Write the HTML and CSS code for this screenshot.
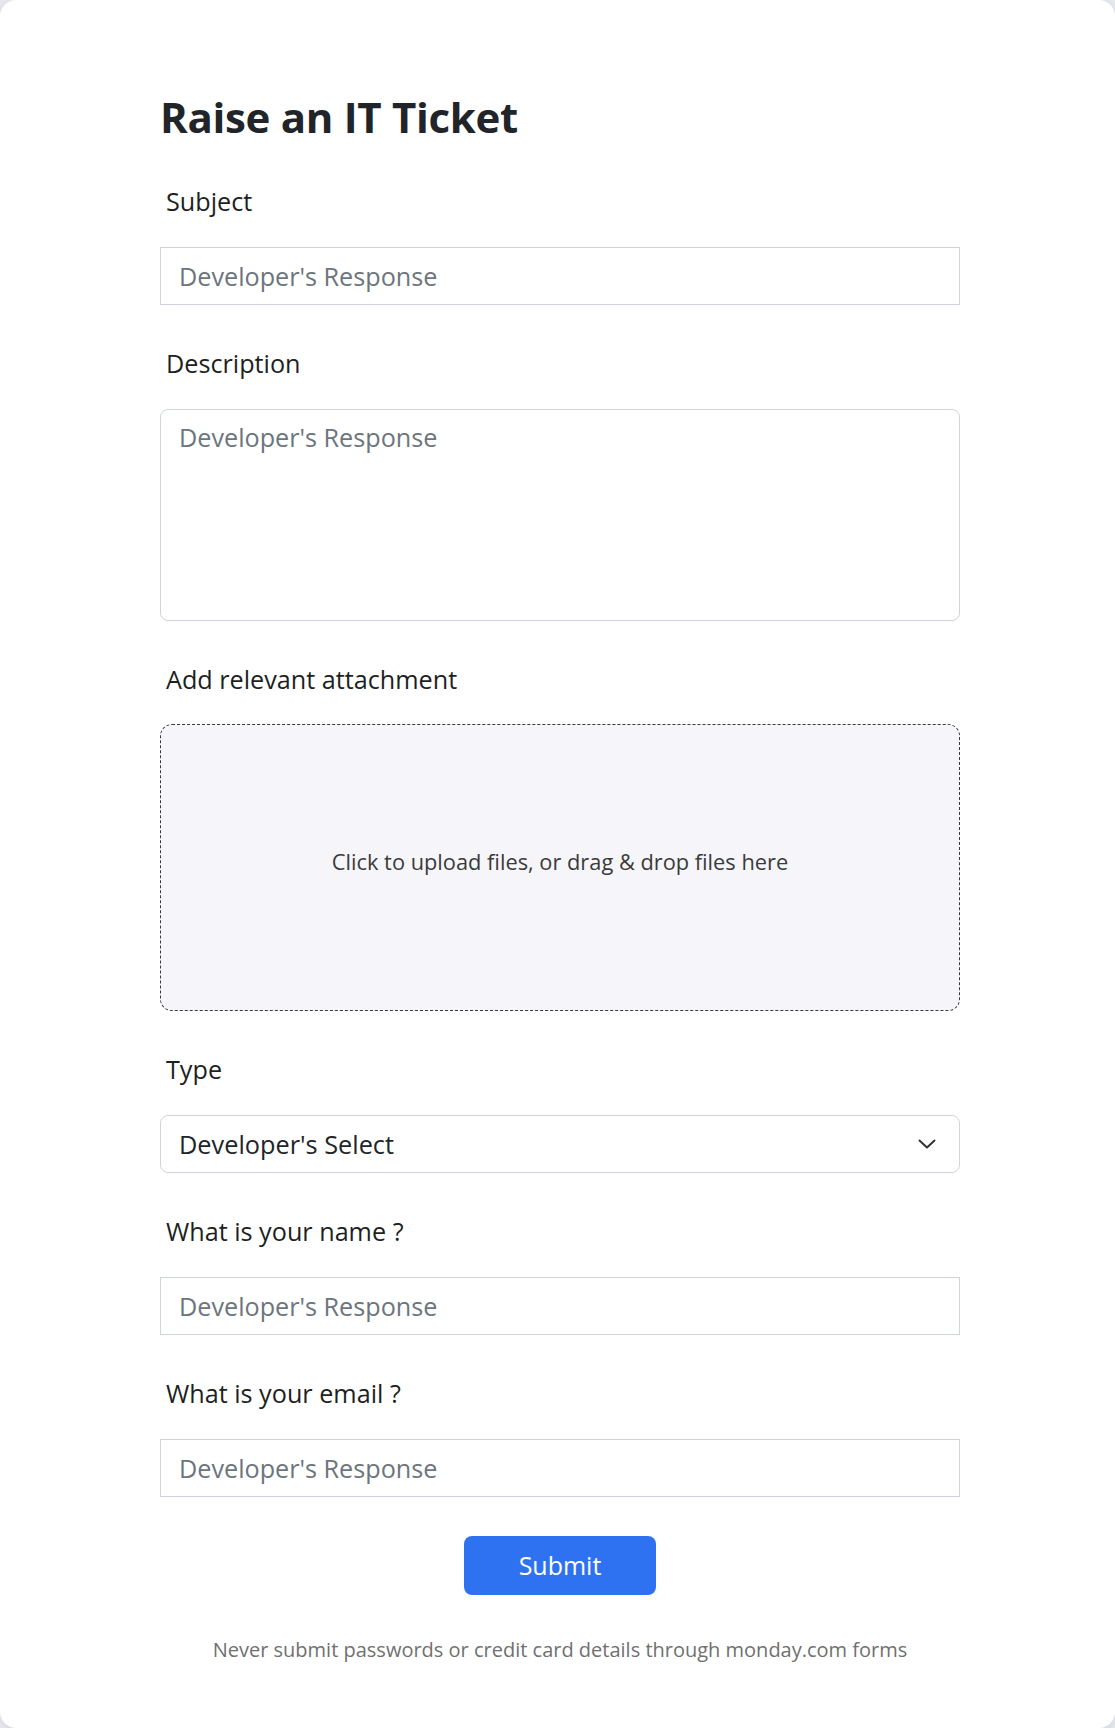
FILE: index.html
```html
<!DOCTYPE html>
<html lang="en">
<head>
<meta charset="utf-8">
<title>Raise an IT Ticket</title>
<link rel="stylesheet" href="styles.css">
</head>
<body>
<div class="card">
  <form class="form">
    <h1 class="title">Raise an IT Ticket</h1>

    <div class="field first">
      <label class="label">Subject</label>
      <div class="input"><span class="placeholder">Developer's Response</span></div>
    </div>

    <div class="field">
      <label class="label">Description</label>
      <div class="textarea"><span class="placeholder">Developer's Response</span></div>
    </div>

    <div class="field">
      <label class="label">Add relevant attachment</label>
      <div class="dropzone">Click to upload files, or drag &amp; drop files here</div>
    </div>

    <div class="field">
      <label class="label">Type</label>
      <div class="select">
        <span class="select-value">Developer's Select</span>
        <svg class="chevron" width="18" height="10" viewBox="0 0 18 10"><polyline points="1.5,1.5 9,8.5 16.5,1.5" fill="none" stroke="#333" stroke-width="2" stroke-linecap="round" stroke-linejoin="round"/></svg>
      </div>
    </div>

    <div class="field">
      <label class="label">What is your name ?</label>
      <div class="input"><span class="placeholder">Developer's Response</span></div>
    </div>

    <div class="field">
      <label class="label">What is your email ?</label>
      <div class="input"><span class="placeholder">Developer's Response</span></div>
    </div>

    <div class="actions">
      <button type="button" class="submit">Submit</button>
    </div>

    <p class="footer">Never submit passwords or credit card details through monday.com forms</p>
  </form>
</div>
</body>
</html>
```

FILE: styles.css
```css
* { box-sizing: border-box; }

html, body {
  margin: 0;
  padding: 0;
  background: #e8e9f0;
}

body {
  font-family: "Open Sans", "Noto Sans", sans-serif;
  color: #212529;
}

.card {
  background: #ffffff;
  min-height: 1728px;
  border-radius: 16px;
  box-shadow: 0 2px 8px rgba(40, 44, 80, 0.12);
  padding: 92px 0 40px 5px;
}

.form {
  width: 800px;
  margin: 0 auto;
}

.title {
  margin: 0;
  font-size: 42px;
  line-height: 50px;
  font-weight: 700;
  letter-spacing: -0.3px;
  color: #212529;
}

.field {
  margin-top: 39.8px;
  display: flex;
  flex-direction: column;
}

.field.first {
  margin-top: 41px;
}

.label {
  display: block;
  font-size: 25.2px;
  line-height: 36px;
  padding-left: 6px;
  margin-bottom: 27.7px;
  color: #1d1f22;
}

.input {
  height: 58.6px;
  border: 1px solid #ced4da;
  padding: 0 18px;
  display: flex;
  align-items: center;
  font-size: 25.2px;
}

.placeholder {
  color: #6c757d;
}

.textarea {
  height: 212px;
  border: 1px solid #ced4da;
  border-radius: 8px;
  padding: 9px 18px;
  font-size: 25.2px;
  line-height: 36px;
}

.dropzone {
  height: 287px;
  border: 1px dashed #3a3a3a;
  border-radius: 12px;
  background: #f6f6fa;
  display: flex;
  align-items: center;
  justify-content: center;
  padding-bottom: 13px;
  font-size: 21.8px;
  color: #3b3b3b;
}

.select {
  height: 58.6px;
  border: 1px solid #d0d4da;
  border-radius: 8px;
  padding: 0 23px 0 18px;
  display: flex;
  align-items: center;
  justify-content: space-between;
  font-size: 25.3px;
  color: #212529;
}

.chevron {
  display: block;
}

.actions {
  display: flex;
  justify-content: center;
  margin-top: 38.7px;
}

.submit {
  width: 192px;
  height: 58.6px;
  border: none;
  border-radius: 8px;
  background: #2f72f1;
  color: #ffffff;
  font-family: "Open Sans", "Noto Sans", sans-serif;
  font-size: 25px;
  font-weight: 500;
  cursor: pointer;
}

.footer {
  margin: 40.8px 0 0;
  text-align: center;
  font-size: 20px;
  line-height: 28.5px;
  color: #707070;
}
```
